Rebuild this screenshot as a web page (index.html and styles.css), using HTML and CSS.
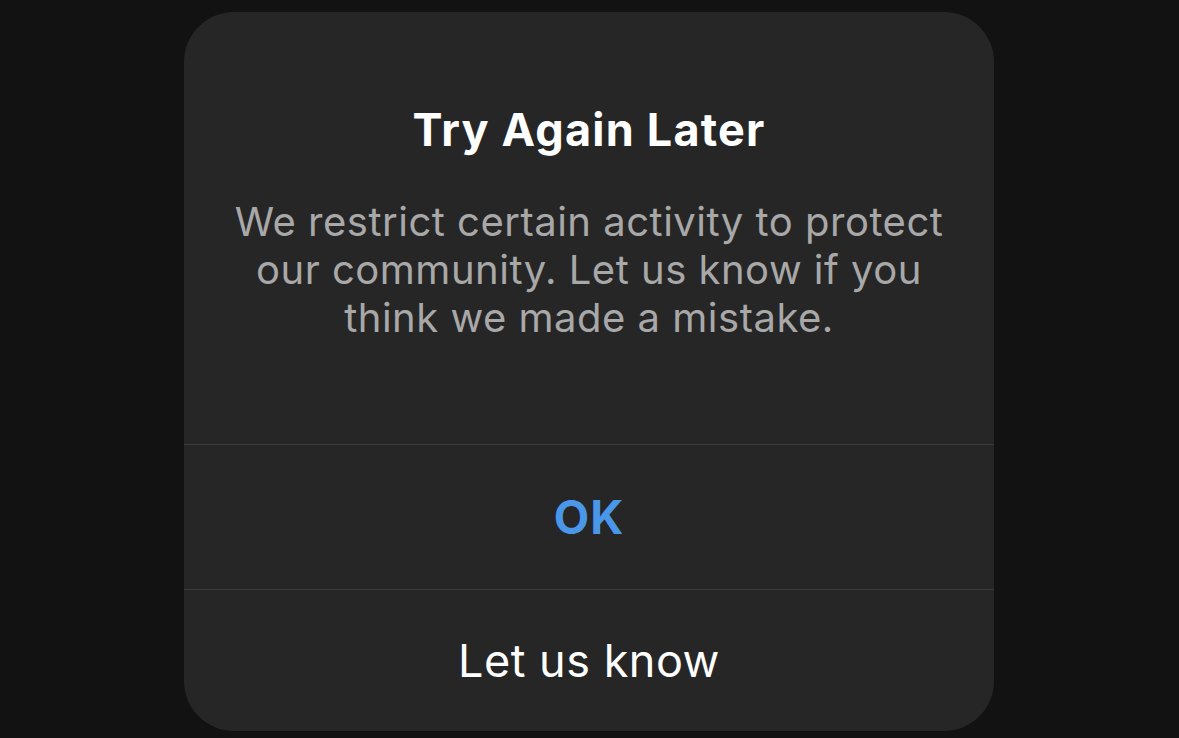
FILE: index.html
```html
<!DOCTYPE html>
<html lang="en">
<head>
  <meta charset="UTF-8" />
  <title>Try Again Later</title>
  <link rel="stylesheet" href="styles.css">
</head>
<body>
  <div class="alert">
    <div class="alert-content">
      <h1 class="alert-title">Try Again Later</h1>
      <p class="alert-message">We restrict certain activity to protect our community. Let us know if you think we made a mistake.</p>
    </div>
    <button class="alert-action primary">OK</button>
    <button class="alert-action">Let us know</button>
  </div>
</body>
</html>
```

FILE: styles.css
```css
* {
  box-sizing: border-box;
}

body {
  margin: 0;
  min-height: 100vh;
  background: #121212;
  font-family: 'Inter', 'Noto Sans', sans-serif;
  display: flex;
  justify-content: center;
  align-items: flex-start;
  padding: 12px 1px 0 0;
}

.alert {
  width: 810px;
  height: 719px;
  background: #262626;
  border-radius: 50px;
  overflow: hidden;
  display: flex;
  flex-direction: column;
}

.alert-content {
  padding: 92px 40px 102px;
  text-align: center;
  border-bottom: 1px solid #3a3a3a;
}

.alert-title {
  margin: 0;
  font-size: 45px;
  line-height: 52px;
  font-weight: 700;
  letter-spacing: 1.2px;
  color: #ffffff;
}

.alert-message {
  margin: 42px 0 0;
  font-size: 40px;
  line-height: 48px;
  letter-spacing: 0.5px;
  color: #a8a8a8;
}

.alert-action {
  flex: 0 0 145px;
  border: none;
  background: transparent;
  font-family: inherit;
  font-size: 45px;
  letter-spacing: 0.5px;
  color: #ffffff;
  cursor: pointer;
}

.alert-action.primary {
  font-size: 46px;
  letter-spacing: 1px;
  color: #4a97ea;
  font-weight: 700;
  border-bottom: 1px solid #3a3a3a;
}

.alert-action:last-child {
  flex: 1;
}
```
